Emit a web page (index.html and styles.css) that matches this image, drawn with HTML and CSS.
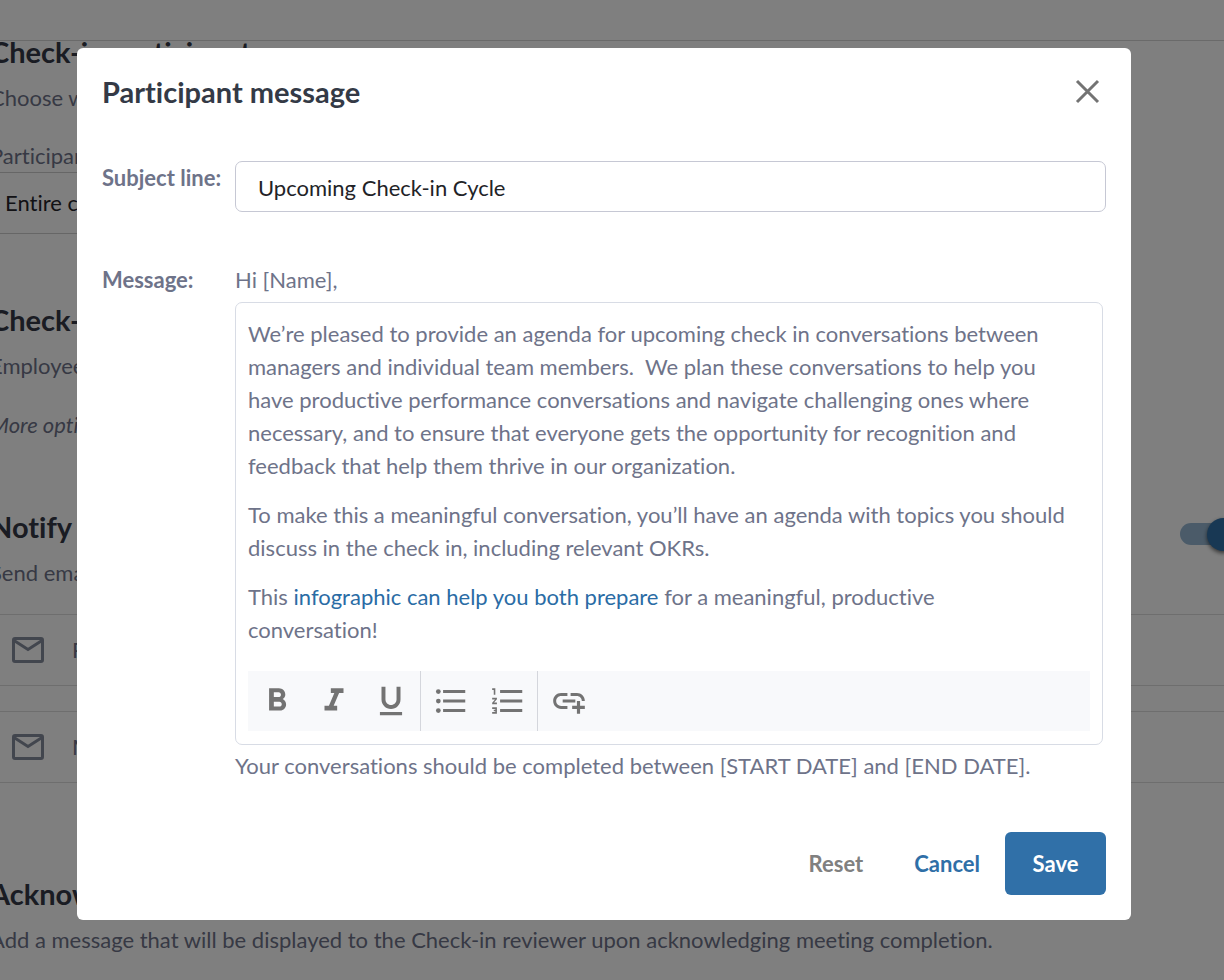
FILE: index.html
```html
<!DOCTYPE html>
<html lang="en">
<head>
<meta charset="utf-8">
<meta name="viewport" content="width=device-width, initial-scale=1">
<title>Participant message</title>
<link rel="stylesheet" href="styles.css">
</head>
<body>
<svg class="sprite" aria-hidden="true">
  <symbol id="mail" viewBox="0 0 38 38"><g fill="none" stroke="currentColor" stroke-width="3"><rect x="4.500" y="7.500" width="29" height="23" rx="1.500"/><path d="M5 9.500l14 9 14-9"/></g></symbol>
</svg>
<div class="page">
  <header class="topbar"></header>
  <main class="settings">
    <section class="section">
      <h2>Check-in participants</h2>
      <p>Choose who</p>
      <label class="select-label" for="participants">Participants</label>
      <select class="select" id="participants"><option>Entire company</option></select>
    </section>
    <section class="section">
      <h2>Check-in</h2>
      <p>Employees</p>
      <p class="more">More options</p>
    </section>
    <section class="section">
      <div class="section-head">
        <h2 id="notify">Notify</h2>
        <input class="switch" type="checkbox" role="switch" aria-labelledby="notify" checked>
      </div>
      <p>Send emails</p>
      <ul class="mails">
        <li><svg class="icon"><use href="#mail"/></svg><span>Participants</span></li>
        <li><svg class="icon"><use href="#mail"/></svg><span>Managers</span></li>
      </ul>
    </section>
    <section class="section last">
      <h2>Acknowledgement</h2>
      <p>Add a message that will be displayed to the Check-in reviewer upon acknowledging meeting completion.</p>
    </section>
  </main>
</div>

<div class="overlay">
  <form class="dialog" role="dialog" aria-modal="true" aria-labelledby="title">
    <div class="dialog-head">
      <h1 id="title">Participant message</h1>
      <button class="close" type="button" aria-label="Close">
        <svg class="icon" viewBox="0 0 38 38"><path d="M9 8l21 21M30 8L9 29" fill="none" stroke="currentColor" stroke-width="3"/></svg>
      </button>
    </div>

    <div class="row">
      <label class="label" for="subject">Subject line:</label>
      <input class="subject" id="subject" type="text" value="Upcoming Check-in Cycle">
    </div>

    <div class="row message-row">
      <span class="label" id="message-label">Message:</span>
      <div class="message">
        <p>Hi [Name],</p>
        <div class="editor">
          <div class="editor-text" contenteditable="true" role="textbox" aria-multiline="true" aria-labelledby="message-label" spellcheck="false">
            <p>We’re pleased to provide an agenda for upcoming check in conversations between managers and individual team members.&nbsp; We plan these conversations to help you<br>have productive performance conversations and navigate challenging ones where<br>necessary, and to ensure that everyone gets the opportunity for recognition and<br>feedback that help them thrive in our organization.</p>
            <p>To make this a meaningful conversation, you’ll have an agenda with topics you should discuss in the check in, including relevant OKRs.</p>
            <p>This <a href="#infographic">infographic can help you both prepare</a> for a meaningful, productive<br>conversation!</p>
          </div>
          <div class="toolbar" role="toolbar" aria-label="Formatting">
            <div class="tools">
              <button type="button" aria-label="Bold"><svg class="icon" viewBox="0 0 24 24"><path d="M15.600 10.790c.97-.67 1.650-1.770 1.650-2.790 0-2.260-1.750-4-4-4H7v14h7.040c2.090 0 3.710-1.700 3.710-3.790 0-1.520-.86-2.820-2.150-3.420zM10 6.500h3c.83 0 1.500.67 1.500 1.500s-.67 1.500-1.500 1.500h-3zm3.500 9H10v-3h3.500c.83 0 1.500.67 1.500 1.500s-.67 1.500-1.500 1.500z"/></svg></button>
              <button type="button" aria-label="Italic"><svg class="icon" viewBox="0 0 24 24"><path d="M10 4v3h2.210l-3.420 8H6v3h8v-3h-2.210l3.420-8H18V4z"/></svg></button>
              <button type="button" aria-label="Underline"><svg class="icon" viewBox="0 0 24 24"><path d="M12 17c3.310 0 6-2.690 6-6V3h-2.500v8c0 1.930-1.570 3.500-3.500 3.500S8.500 12.930 8.500 11V3H6v8c0 3.310 2.690 6 6 6zM5 19v2h14v-2z"/></svg></button>
            </div>
            <div class="tools">
              <button type="button" aria-label="Bulleted list"><svg class="icon" viewBox="0 0 24 24"><circle cx="4" cy="6" r="1.500"/><circle cx="4" cy="12" r="1.500"/><circle cx="4" cy="18" r="1.500"/><path d="M7 5h14v2H7zM7 11h14v2H7zM7 17h14v2H7z"/></svg></button>
              <button type="button" aria-label="Numbered list"><svg class="icon" viewBox="0 0 24 24"><path d="M2 17h2v.5H3v1h1v.5H2v1h3v-4H2zM3 8h1V4H2v1h1zM2 11h1.800L2 13.100v.9h3v-1H3.200L5 10.900V10H2zM7 5h14v2H7zM7 17h14v2H7zM7 11h14v2H7z"/></svg></button>
            </div>
            <div class="tools">
              <button type="button" aria-label="Add link"><svg class="icon" viewBox="0 0 24 24"><path d="M8 11h8v2H8zM20.100 12H22c0-2.760-2.240-5-5-5h-4v1.900h4c1.710 0 3.100 1.390 3.100 3.100zM3.900 12c0-1.710 1.390-3.100 3.100-3.100h4V7H7c-2.760 0-5 2.240-5 5s2.240 5 5 5h4v-1.900H7c-1.710 0-3.100-1.390-3.100-3.100zM19 12h-2v3h-3v2h3v3h2v-3h3v-2h-3z"/></svg></button>
            </div>
          </div>
        </div>
        <p>Your conversations should be completed between [START DATE] and [END DATE].</p>
      </div>
    </div>

    <div class="actions">
      <button class="reset" type="reset">Reset</button>
      <button class="cancel" type="button">Cancel</button>
      <button class="save" type="submit">Save</button>
    </div>
  </form>
</div>
</body>
</html>
```
FILE: styles.css
```css
* { box-sizing: border-box; }

body {
  margin: 0;
  background: #fff;
  color: #6e7389;
  font: 22px/33px Lato, "Open Sans", sans-serif;
  font-variant-ligatures: none;
}

h1, h2, p, ul { margin: 0; padding: 0; }
h1, h2 { font-size: 29px; font-weight: 700; }
h1 { color: #343a46; line-height: 36px; }
h2 { color: #343846; line-height: 22px; }

button, input, select { font: inherit; font-variant-ligatures: none; }
button {
  border: 0;
  padding: 0;
  background: none;
  cursor: pointer;
}

.sprite { position: absolute; width: 0; height: 0; }
.icon { display: block; width: 38px; height: 38px; fill: currentColor; }

.page { height: 100vh; overflow: hidden; }
.topbar { height: 41px; border-bottom: 1px solid #d4d4d4; }
.settings { margin: 0 -16px 0 -10px; line-height: 32px; }
.section { margin-bottom: 75px; }
.section h2 + p, .section-head + p { margin-top: 19px; }
.select-label { display: block; margin-top: 26px; }
.select {
  appearance: none;
  display: block;
  width: 50%;
  height: 62px;
  padding: 0 14px;
  border: 1px solid #ccc;
  background: #fff;
  color: #24242a;
}
.section .more { margin-top: 27px; font-style: italic; }
.section-head { display: flex; justify-content: space-between; height: 22px; }

.switch {
  appearance: none;
  display: flex;
  align-items: center;
  justify-content: flex-end;
  width: 60px;
  height: 22px;
  margin: 7px 0 0;
  border-radius: 11px;
  background: #97b7d2;
}
.switch::before {
  content: "";
  flex: none;
  width: 33px;
  height: 33px;
  border-radius: 50%;
  background: #3070a8;
  box-shadow: 0 2px 4px #0009;
}

.mails { display: grid; gap: 25px; margin-top: 25px; list-style: none; }
.mails li {
  display: flex;
  align-items: center;
  gap: 25px;
  height: 72px;
  padding-left: 18px;
  border: 1px solid #dcdcdc;
}
.mails .icon { color: #858c9c; }
.last { margin-top: 100px; }

.overlay {
  position: absolute;
  inset: 0;
  padding: 48px 93px 60px 77px;
  background: rgba(0, 0, 0, 0.5);
}
.dialog {
  padding: 26px 25px 25px;
  border-radius: 6px;
  background: #fff;
}
.dialog-head {
  display: flex;
  align-items: center;
  justify-content: space-between;
  height: 36px;
  margin-bottom: 51px;
}
.close { color: #737373; }

.row { display: grid; grid-template-columns: 133px 1fr; }
.label { font-weight: 700; }
.subject {
  width: 100%;
  height: 51px;
  padding: 1px 22px 0;
  border: 1px solid #c6c8d4;
  border-radius: 7px;
  background: #fff;
  color: #222327;
}
.message-row { margin-top: 51px; }
.editor {
  margin: 6px 3px 4px 0;
  padding: 14px 12px 13px;
  border: 1px solid #d8dce5;
  border-radius: 7px;
}
.editor-text { display: grid; gap: 16px; outline: 0; }
a { color: #2a6ca5; text-decoration: none; }

.toolbar { display: flex; margin-top: 25px; background: #f8f9fb; }
.tools { display: flex; height: 60px; padding: 0 1px; }
.tools:first-child { padding: 0 1px 0 0; }
.tools + .tools { border-left: 1px solid #d4d6dc; }
.tools + .tools:last-child { padding: 0 2px; }
.tools button {
  display: grid;
  place-items: center;
  width: 57px;
  color: #737373;
}

.actions {
  display: flex;
  justify-content: flex-end;
  align-items: center;
  margin-top: 50px;
}
.actions button { height: 63px; font-weight: 700; }
.actions .reset { margin-right: 51px; color: #808080; }
.actions .cancel { margin-right: 25px; color: #2f6fa7; }
.actions .save {
  min-width: 101px;
  border-radius: 6px;
  background: #3070a8;
  color: #fff;
}
```
